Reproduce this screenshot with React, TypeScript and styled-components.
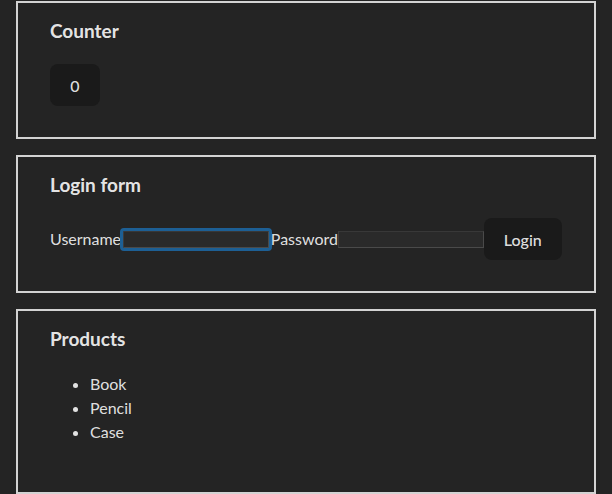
import React from "react";
import styled, { createGlobalStyle } from "styled-components";

const GlobalStyle = createGlobalStyle`
  html, body {
    margin: 0;
    padding: 0;
    background: #242424;
  }
  body {
    color: rgba(255, 255, 255, 0.87);
    font-family: Lato, "Noto Sans", sans-serif;
    font-size: 16px;
    line-height: 24px;
  }
`;

const Page = styled.main`
  display: flex;
  flex-direction: column;
  gap: 16px;
  padding: 1px 16px 0;
`;

const Card = styled.section`
  border: 2px solid #d3d3d3;
  padding: 14px 32px 31px;
  background: #242424;
`;

const Title = styled.h3`
  margin: 0 0 19px;
  font-size: 19px;
  line-height: 28px;
  font-weight: 700;
  color: rgba(255, 255, 255, 0.9);
`;

const Button = styled.button`
  border-radius: 8px;
  border: 1px solid transparent;
  padding: 9.5px 19.2px;
  font-size: 16px;
  line-height: 21px;
  font-family: inherit;
  font-weight: 500;
  background: #1a1a1a;
  color: rgba(255, 255, 255, 0.87);
  cursor: pointer;
  flex: none;
`;

const Row = styled.form`
  display: flex;
  align-items: center;
`;

const Label = styled.label`
  flex: none;
`;

const Field = styled.input<{ $focused?: boolean }>`
  flex: 1;
  min-width: 0;
  height: 17px;
  box-sizing: border-box;
  padding: 0 2px;
  background: #2a2a2a;
  border: 1px solid #4a4a4a;
  border-top-color: #383838;
  border-left-color: #3c3c3c;
  color: #fff;
  font-family: inherit;
  outline: ${(p) => (p.$focused ? "3px solid #1d5f94" : "none")};
  outline-offset: 0;
  border-radius: ${(p) => (p.$focused ? "1px" : "0")};
  margin: ${(p) => (p.$focused ? "0 2px" : "0")};
`;

const List = styled.ul`
  margin: 16px 0 17px;
  padding-left: 40px;
`;

export default function App() {
  return (
    <>
      <GlobalStyle />
      <Page>
        <Card>
          <Title>Counter</Title>
          <Button type="button">0</Button>
        </Card>
        <Card>
          <Title>Login form</Title>
          <Row onSubmit={(e) => e.preventDefault()}>
            <Label>Username</Label>
            <Field type="text" $focused />
            <Label>Password</Label>
            <Field type="password" />
            <Button type="submit">Login</Button>
          </Row>
        </Card>
        <Card>
          <Title>Products</Title>
          <List>
            <li>Book</li>
            <li>Pencil</li>
            <li>Case</li>
          </List>
        </Card>
      </Page>
    </>
  );
}
